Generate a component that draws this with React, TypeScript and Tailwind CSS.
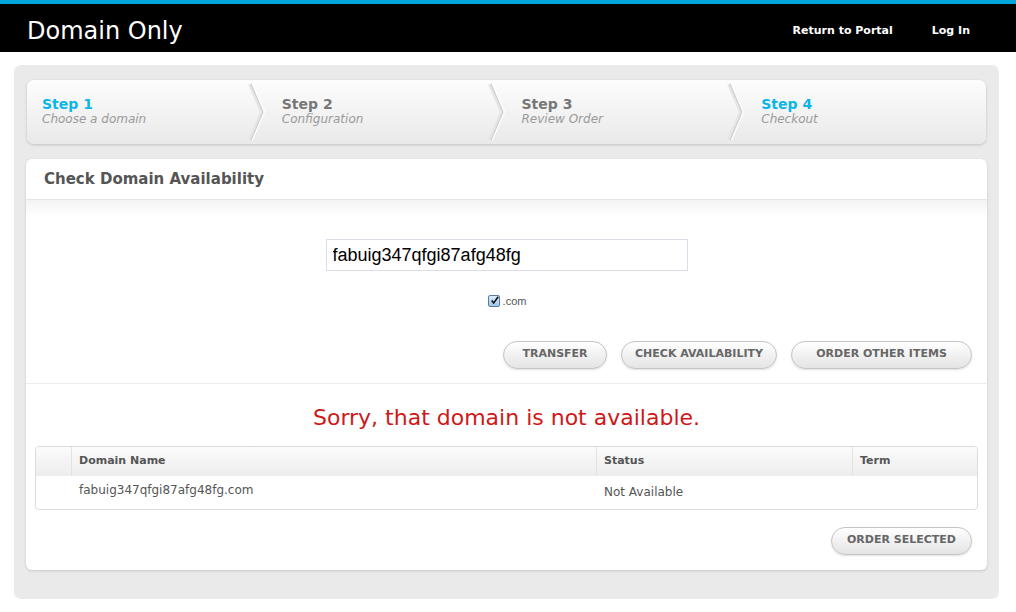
import React from 'react';

const steps = [
  { title: 'Step 1', sub: 'Choose a domain', active: true },
  { title: 'Step 2', sub: 'Configuration', active: false },
  { title: 'Step 3', sub: 'Review Order', active: false },
  { title: 'Step 4', sub: 'Checkout', active: true },
];

function Chevron() {
  return (
    <svg width="20" height="64" viewBox="0 0 20 64" className="shrink-0">
      <polyline points="3,4 15,32 3,60" fill="none" stroke="#e6e6e6" strokeWidth="4" />
      <polyline points="4,4 16,32 4,60" fill="none" stroke="#cfcfcf" strokeWidth="1.2" />
      <polyline points="5.5,4 17.5,32 5.5,60" fill="none" stroke="#ffffff" strokeWidth="1.2" />
    </svg>
  );
}

function PillButton({ label, className = '' }: { label: string; className?: string }) {
  return (
    <button
      className={`h-[28px] rounded-full border border-[#c4c4c4] bg-gradient-to-b from-[#ffffff] to-[#e4e4e4] text-[11px] font-bold text-[#666] shadow-[0_1px_2px_rgba(0,0,0,0.12)] ${className}`}
    >
      {label}
    </button>
  );
}

export default function App() {
  return (
    <div className="min-h-screen bg-white font-['DejaVu_Sans',Verdana,sans-serif]">
      {/* top bar */}
      <div className="h-[4px] bg-[#00a5dc]" />
      <header className="flex h-[48px] items-center justify-between bg-black pl-[27px] pr-[46px] pt-[5px]">
        <h1 className="text-[24px] leading-none text-white">Domain Only</h1>
        <nav className="flex items-center gap-[39px] pt-[2px] text-[11px] font-bold text-white">
          <a>Return to Portal</a>
          <a>Log In</a>
        </nav>
      </header>

      <div className="pl-[14px] pr-[17px] pt-[13px]">
        <div className="rounded-[7px] bg-[#eaeaea] px-[12px] pb-[29px] pt-[15px]">
          {/* steps */}
          <div className="mx-[1px] flex h-[64px] items-stretch rounded-[7px] bg-gradient-to-b from-[#fdfdfd] to-[#e9e9e9] shadow-[0_1px_3px_rgba(0,0,0,0.18)]">
            {steps.map((s, i) => (
              <div key={s.title} className="flex flex-1 items-stretch">
                <div className="flex flex-1 flex-col justify-center pl-[15px] pb-[2px]">
                  <div className={`text-[14px] font-bold leading-[16px] ${s.active ? 'text-[#0cb5e8]' : 'text-[#777]'}`}>{s.title}</div>
                  <div className="text-[12px] italic leading-[14px] text-[#9a9a9a]">{s.sub}</div>
                </div>
                {i < steps.length - 1 && <Chevron />}
              </div>
            ))}
          </div>

          {/* card */}
          <div className="mt-[15px] rounded-[6px] bg-white shadow-[0_1px_3px_rgba(0,0,0,0.15)]">
            <div className="flex h-[41px] items-center border-b border-[#e6e6e6] px-[18px]">
              <h2 className="text-[15px] font-bold text-[#555]">Check Domain Availability</h2>
            </div>
            <div className="h-[16px] bg-gradient-to-b from-[#f3f3f3] to-white" />

            <div className="flex flex-col items-center pt-[23px]">
              <input
                readOnly
                value="fabuig347qfgi87afg48fg"
                className="h-[32px] w-[362px] border border-[#dcdcea] px-[6px] font-['Liberation_Sans',Arial,sans-serif] text-[18px] text-black outline-none"
              />
              <label className="mt-[22px] ml-[1px] flex items-center gap-[3px] font-['Liberation_Sans',Arial,sans-serif] text-[11px] text-[#555]">
                <span className="flex h-[12px] w-[12px] items-center justify-center rounded-[2px] border border-[#5a7aa0] bg-gradient-to-b from-[#dcecfc] to-[#9ec6ee]">
                  <svg width="11" height="11" viewBox="0 0 11 11" className="-mt-[2px] ml-[1px]">
                    <path d="M2 5.5 L4.5 8.5 L10 0.8" fill="none" stroke="#111" strokeWidth="2" />
                  </svg>
                </span>
                .com
              </label>
            </div>

            <div className="mt-[31px] flex justify-end gap-[14px] pr-[15px]">
              <PillButton label="TRANSFER" className="w-[104px]" />
              <PillButton label="CHECK AVAILABILITY" className="w-[156px]" />
              <PillButton label="ORDER OTHER ITEMS" className="w-[181px]" />
            </div>

            <div className="mt-[14px] border-t border-[#ececec]" />

            <p className="mt-[20px] text-center text-[22px] leading-[28px] text-[#d01818]">
              Sorry, that domain is not available.
            </p>

            <div className="mx-[9px] mt-[14px] overflow-hidden rounded-[4px] border border-[#dcdcdc]">
              <div className="flex h-[29px] items-center bg-gradient-to-b from-[#fbfbfb] to-[#ededed] text-[11px] font-bold text-[#555]">
                <div className="h-full w-[36px] border-r border-[#e2e2e2]" />
                <div className="flex h-full w-[525px] items-center border-r border-[#e2e2e2] pl-[7px]">Domain Name</div>
                <div className="flex h-full w-[256px] items-center border-r border-[#e2e2e2] pl-[7px]">Status</div>
                <div className="flex h-full flex-1 items-center pl-[7px]">Term</div>
              </div>
              <div className="flex h-[33px] items-center text-[12px] text-[#555]">
                <div className="w-[36px]" />
                <div className="w-[525px] pl-[7px] pb-[4px]">fabuig347qfgi87afg48fg.com</div>
                <div className="w-[256px] pl-[7px]">Not Available</div>
                <div className="flex-1" />
              </div>
            </div>

            <div className="flex justify-end pb-[15px] pr-[15px] pt-[17px]">
              <PillButton label="ORDER SELECTED" className="w-[141px]" />
            </div>
          </div>
        </div>
      </div>
    </div>
  );
}
